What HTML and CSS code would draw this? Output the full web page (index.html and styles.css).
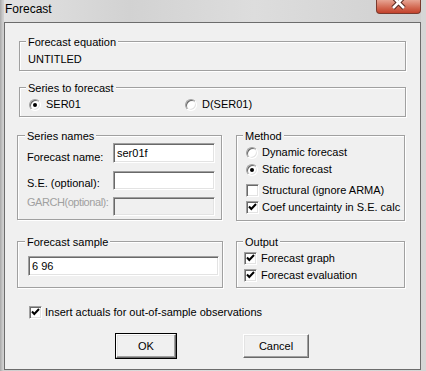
FILE: index.html
```html
<!DOCTYPE html>
<html lang="en">
<head>
  <meta charset="UTF-8">
  <title>Forecast</title>
  <link rel="stylesheet" href="styles.css">
</head>
<body>

  <div class="window">
    <div class="titlebar">
      <span class="title">Forecast</span>
      <span class="close">
        <svg width="45" height="14" viewBox="0 0 45 14">
          <path d="M17 -3 L28 8 M28 -3 L17 8" stroke="#5a2a22" stroke-width="4.6" fill="none"/>
          <path d="M17 -3 L28 8 M28 -3 L17 8" stroke="#fff" stroke-width="2.6" fill="none"/>
        </svg>
      </span>
    </div>

    <div class="client">

      <div class="grp eq">
        <span class="legend">Forecast equation</span>
        <div class="eq-name">UNTITLED</div>
      </div>

      <div class="grp series">
        <span class="legend">Series to forecast</span>
        <div class="opts">
          <label class="opt first"><span class="rad on"></span>SER01</label>
          <label class="opt"><span class="rad"></span>D(SER01)</label>
        </div>
      </div>

      <div class="row names-row">
        <div class="grp names">
          <span class="legend wide">Series names</span>
          <div class="frow r1">
            <span class="flabel">Forecast name:</span>
            <input class="field" type="text" value="ser01f">
          </div>
          <div class="frow r2">
            <span class="flabel">S.E. (optional):</span>
            <input class="field" type="text" value="">
          </div>
          <div class="frow r3">
            <span class="flabel off">GARCH(optional):</span>
            <input class="field" type="text" value="" disabled>
          </div>
        </div>

        <div class="grp method">
          <span class="legend">Method</span>
          <div class="item m1"><span class="rad"></span>Dynamic forecast</div>
          <div class="item m2"><span class="rad on"></span>Static forecast</div>
          <div class="item m3"><span class="chk"></span>Structural (ignore ARMA)</div>
          <div class="item m4"><span class="chk"><svg width="11" height="11" viewBox="0 0 11 11"><path d="M2 4.5 L4.3 7 L9 2" stroke="#000" stroke-width="2" fill="none"/></svg></span>Coef uncertainty in S.E. calc</div>
        </div>
      </div>

      <div class="row sample-row">
        <div class="grp sample">
          <span class="legend wide">Forecast sample</span>
          <input class="field smp" type="text" value="6 96">
        </div>

        <div class="grp output">
          <span class="legend">Output</span>
          <div class="item o1"><span class="chk"><svg width="11" height="11" viewBox="0 0 11 11"><path d="M2 4.5 L4.3 7 L9 2" stroke="#000" stroke-width="2" fill="none"/></svg></span>Forecast graph</div>
          <div class="item o2"><span class="chk"><svg width="11" height="11" viewBox="0 0 11 11"><path d="M2 4.5 L4.3 7 L9 2" stroke="#000" stroke-width="2" fill="none"/></svg></span>Forecast evaluation</div>
        </div>
      </div>

      <div class="item actuals"><span class="chk"><svg width="11" height="11" viewBox="0 0 11 11"><path d="M2 4.5 L4.3 7 L9 2" stroke="#000" stroke-width="2" fill="none"/></svg></span>Insert actuals for out-of-sample observations</div>

      <div class="buttons">
        <button class="btn ok" type="button">OK</button>
        <button class="btn cancel" type="button">Cancel</button>
      </div>

    </div>
  </div>

</body>
</html>
```

FILE: styles.css
```css
body {
  margin: 0;
  background: #dadada;
  font-family: "Liberation Sans", Arial, sans-serif;
  font-size: 11px;
  color: #000;
}
.window {
  width: 426px;
  height: 371px;
  box-sizing: border-box;
  padding: 0 5px 1px 4px;
  display: flex;
  flex-direction: column;
  background: linear-gradient(to right, #a9a9a9 0, #cfcfcf 3px, #dcdcdc 40%, #d6d6d6 100%);
}
.titlebar {
  height: 22px;
  display: flex;
  align-items: flex-start;
  background: linear-gradient(to right, #e2e2e2, #d2d2d2 30%, #dddddd 60%, #d0d0d0);
}
.title {
  font-size: 12px;
  line-height: 14px;
  padding: 2px 0 0 1px;
  color: #000;
}
.close {
  margin-left: auto;
  width: 45px;
  height: 14px;
  box-sizing: border-box;
  border: 1px solid #7a3a2e;
  border-top: 0;
  border-radius: 0 0 4px 4px;
  background: linear-gradient(to bottom, #e7a493, #d2664f 60%, #c2412b);
  overflow: hidden;
}
.close svg {
  display: block;
  margin: 0 -1px;
}
.client {
  height: 348px;
  box-sizing: border-box;
  border: 1px solid #6c6c6c;
  background: #f0f0f0;
}

/* group boxes */
.grp {
  position: relative;
  box-sizing: border-box;
  border: 1px solid #a0a0a0;
  box-shadow: inset 1px 1px #fff, 1px 1px #fff;
}
.legend {
  position: absolute;
  top: -6px;
  left: 6px;
  padding: 0 2px;
  line-height: 13px;
  background: #f0f0f0;
}
.legend.wide {
  left: 7px;
}
.eq {
  margin: 18px 0 0 14px;
  width: 387px;
  height: 30px;
}
.eq-name {
  padding: 11px 0 0 8px;
  line-height: 13px;
}
.series {
  margin: 16px 0 0 14px;
  width: 387px;
  height: 30px;
}
.opts {
  display: flex;
  padding: 10px 0 0 9px;
}
.opt {
  display: flex;
  align-items: center;
  line-height: 13px;
}
.opt.first {
  width: 156px;
}
.opt .rad {
  margin-right: 5px;
}

.row {
  display: flex;
  align-items: flex-start;
}
.names-row {
  margin-top: 18px;
}
.names {
  margin-left: 12px;
  width: 205px;
  height: 85px;
  padding: 7px 0 0 9px;
}
.method {
  margin-left: 14px;
  width: 169px;
  height: 86px;
  padding: 10px 0 0 9px;
}
.frow {
  display: flex;
  align-items: flex-start;
}
.flabel {
  width: 86px;
  flex: none;
  line-height: 13px;
  white-space: nowrap;
}
.flabel.off {
  color: #a0a0a0;
  letter-spacing: -0.45px;
}
.r1 .flabel { margin-top: 8px; }
.r2 { margin-top: 7px; }
.r2 .flabel { margin-top: 6px; }
.r3 { margin-top: 7px; }
.r3 .flabel { margin-top: -1px; }
.r1 .field { height: 20px; }
.r2 .field, .r3 .field { height: 19px; }

.field {
  width: 102px;
  box-sizing: border-box;
  margin: 0;
  padding: 0 3px;
  border: 1px solid;
  border-color: #a0a0a0 #fff #fff #a0a0a0;
  box-shadow: inset 1px 1px #696969, inset -1px -1px #e3e3e3;
  background: #fff;
  font: inherit;
  color: #000;
  line-height: 13px;
  outline: none;
}
.field:disabled {
  background: #f0f0f0;
}

/* radios and check boxes */
.item {
  display: flex;
  align-items: center;
  line-height: 13px;
  white-space: nowrap;
}
.item .rad {
  margin-right: 4px;
}
.item .chk {
  margin-right: 3px;
}
.m2 { margin-top: 4px; }
.m3 { margin-top: 8px; }
.m4 { margin-top: 4px; }

.rad {
  position: relative;
  width: 12px;
  height: 12px;
  box-sizing: border-box;
  flex: none;
  border-radius: 50%;
  border: 1px solid;
  border-color: #a0a0a0 #fff #fff #a0a0a0;
  box-shadow: inset 1px 1px #696969, inset -1px -1px #e3e3e3;
  background: #fff;
}
.rad.on::after {
  content: "";
  position: absolute;
  left: 3px;
  top: 3px;
  width: 4px;
  height: 4px;
  border-radius: 50%;
  background: #000;
}
.chk {
  width: 13px;
  height: 13px;
  box-sizing: border-box;
  flex: none;
  border: 1px solid;
  border-color: #a0a0a0 #fff #fff #a0a0a0;
  box-shadow: inset 1px 1px #696969, inset -1px -1px #e3e3e3;
  background: #fff;
}
.chk svg {
  display: block;
}

.sample-row {
  margin-top: 20px;
}
.sample {
  margin-left: 12px;
  width: 206px;
  height: 47px;
  padding: 14px 0 0 10px;
}
.smp {
  width: 191px;
  height: 20px;
  padding-left: 3px;
}
.output {
  margin-left: 13px;
  width: 169px;
  height: 47px;
  padding: 10px 0 0 7px;
}
.output .chk {
  margin-right: 4px;
}
.o2 { margin-top: 4px; }

.actuals {
  margin: 18px 0 0 24px;
}
.actuals .chk {
  margin-right: 3px;
}

/* buttons */
.buttons {
  display: flex;
  margin-top: 15px;
}
.btn {
  height: 24px;
  box-sizing: border-box;
  margin: 0;
  padding: 0;
  border: 1px solid;
  border-color: #fff #696969 #696969 #fff;
  box-shadow: inset -1px -1px #a0a0a0, inset 1px 1px #e3e3e3;
  background: #f0f0f0;
  font: inherit;
  color: #000;
}
.ok {
  width: 60px;
  margin-left: 111px;
  outline: 1px solid #000;
}
.cancel {
  width: 66px;
  margin-left: 67px;
}
```
